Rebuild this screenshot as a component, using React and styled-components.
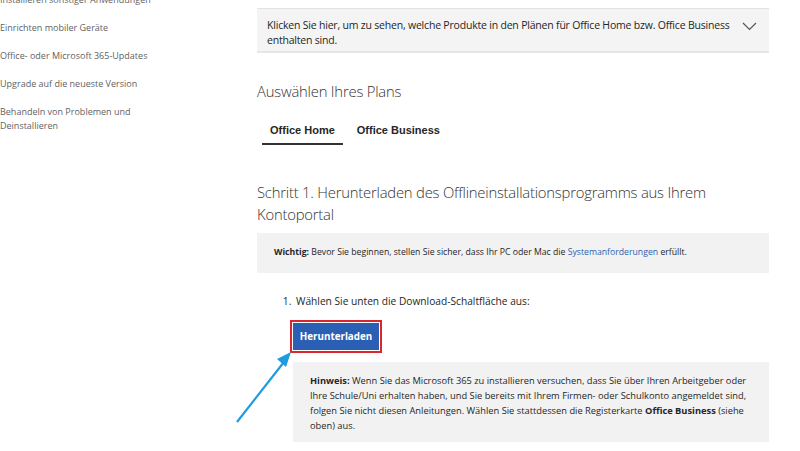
import React from "react";
import styled, { createGlobalStyle } from "styled-components";

const GlobalStyle = createGlobalStyle`
  html, body {
    margin: 0;
    padding: 0;
    background: #fff;
    overflow: hidden;
  }
  body {
    font-family: "Open Sans", "Noto Sans", sans-serif;
    color: #262626;
  }
`;

const Page = styled.div`
  position: relative;
  display: flex;
  width: 800px;
  height: 451px;
  overflow: hidden;
`;

// Left navigation column
const Sidebar = styled.nav`
  width: 257px;
  flex-shrink: 0;
  margin-top: -14px;
`;

const NavItem = styled.div`
  width: 170px;
  padding: 7px 0;
  font-size: 9px;
  line-height: 14px;
  color: #5f5f5f;
`;

const Main = styled.main`
  width: 512px;
  display: flex;
  flex-direction: column;
`;

const Expander = styled.div`
  margin-top: 8px;
  display: flex;
  align-items: flex-start;
  justify-content: space-between;
  background: #f4f4f4;
  border-top: 1px solid #e2e2e2;
  border-bottom: 2px solid #e6e6e6;
  padding: 9px 12px 3px 10px;
  font-size: 10.5px;
  letter-spacing: -0.2px;
  line-height: 15px;
  color: #262626;
`;

const ExpanderText = styled.div`
  width: 470px;
`;

const Chevron = styled.svg`
  width: 15px;
  height: 9px;
  margin-top: 4px;
  flex-shrink: 0;
`;

// Light section titles
const Heading = styled.h2`
  margin: ${props => props.top}px 0 0;
  font-size: 14.8px;
  letter-spacing: -0.2px;
  line-height: 22px;
  font-weight: 300;
  color: #333;
`;

const Tabs = styled.div`
  display: flex;
  gap: 6px;
  margin-top: 16px;
  margin-left: 5px;
`;

const Tab = styled.div`
  font-family: "Liberation Sans", Arial, sans-serif;
  font-weight: 700;
  font-size: 11px;
  color: #262626;
  padding: 6px 8px 7px;
  border-bottom: 2px solid ${props => (props.active ? "#333" : "transparent")};
`;

const Note = styled.div`
  margin: ${props => props.top}px 0 0 ${props => props.indent || 0}px;
  background: #f2f2f2;
  padding: ${props => props.pad};
  font-size: ${props => props.size}px;
  line-height: 15px;
  color: #262626;

  b {
    font-weight: 700;
  }

  a {
    color: #2f5fae;
    text-decoration: none;
  }
`;

const Steps = styled.ol`
  margin: 20px 0 0;
  padding: 0 0 0 37px;
  font-size: 10.2px;
  line-height: 16px;
  color: #262626;

  li {
    padding-left: 2px;
  }
`;

const Highlight = styled.div`
  margin-top: 11px;
  margin-left: 33px;
  padding: 1px;
  border: 2px solid #d9262f;
  width: fit-content;
`;

const DownloadButton = styled.button`
  display: block;
  width: 86px;
  height: 27px;
  background: #2b5fb3;
  color: #fff;
  border: none;
  font-family: "Open Sans", sans-serif;
  font-weight: 700;
  font-size: 9.8px;
  padding: 0;
  cursor: pointer;
`;

const Arrow = styled.svg`
  position: absolute;
  left: 230px;
  top: 345px;
  width: 70px;
  height: 85px;
`;

const navItems = [
  "Installieren sonstiger Anwendungen",
  "Einrichten mobiler Geräte",
  "Office- oder Microsoft 365-Updates",
  "Upgrade auf die neueste Version",
  "Behandeln von Problemen und Deinstallieren"
];

export default function App() {
  return (
    <>
      <GlobalStyle />
      <Page>
        <Sidebar>
          {navItems.map(item => (
            <NavItem key={item}>{item}</NavItem>
          ))}
        </Sidebar>
        <Main>
          <Expander>
            <ExpanderText>
              Klicken Sie hier, um zu sehen, welche Produkte in den Plänen für
              Office Home bzw. Office Business enthalten sind.
            </ExpanderText>
            <Chevron viewBox="0 0 15 9">
              <path d="M1 1 L7.5 7.5 L14 1" fill="none" stroke="#555" strokeWidth="1.2" />
            </Chevron>
          </Expander>

          <Heading top={27}>Auswählen Ihres Plans</Heading>

          <Tabs>
            <Tab active>Office Home</Tab>
            <Tab>Office Business</Tab>
          </Tabs>

          <Heading top={36}>
            Schritt 1. Herunterladen des Offlineinstallationsprogramms aus Ihrem
            Kontoportal
          </Heading>

          <Note top={8} size={8.7} pad="12px 17px 13px">
            <b>Wichtig:</b> Bevor Sie beginnen, stellen Sie sicher, dass Ihr PC
            oder Mac die <a href="#">Systemanforderungen</a> erfüllt.
          </Note>

          <Steps>
            <li>Wählen Sie unten die Download-Schaltfläche aus:</li>
          </Steps>

          <Highlight>
            <DownloadButton>Herunterladen</DownloadButton>
          </Highlight>

          <Note top={9} indent={36} size={9.3} pad="11px 17px 9px">
            <b>Hinweis:</b> Wenn Sie das Microsoft 365 zu installieren versuchen,
            dass Sie über Ihren Arbeitgeber oder Ihre Schule/Uni erhalten haben,
            und Sie bereits mit Ihrem Firmen- oder Schulkonto angemeldet sind,
            folgen Sie nicht diesen Anleitungen. Wählen Sie stattdessen die
            Registerkarte <b>Office Business</b> (siehe oben) aus.
          </Note>
        </Main>

        <Arrow viewBox="0 0 70 85">
          <line x1="7" y1="77" x2="54" y2="17" stroke="#1d9be3" strokeWidth="2.2" />
          <path d="M61 7 L47 14 L56 22 Z" fill="#1d9be3" />
        </Arrow>
      </Page>
    </>
  );
}
